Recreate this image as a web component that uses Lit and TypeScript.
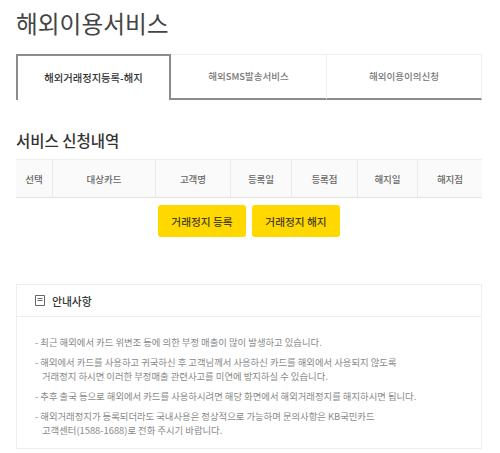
import { LitElement, html, css } from "lit";
import { customElement } from "lit/decorators.js";

const cols: [string, number][] = [
  ["선택", 37], ["대상카드", 103], ["고객명", 75], ["등록일", 61],
  ["등록점", 66], ["해지일", 60], ["해지점", 64],
];

@customElement("app-root")
export class AppRoot extends LitElement {
  static styles = css`
    :host {
      display: block;
      width: 500px;
      height: 453px;
      overflow: hidden;
      background: #fff;
      font-family: "Noto Sans CJK KR", "Noto Sans", sans-serif;
      box-sizing: border-box;
      padding: 0 18px 0 16px;
      color: #333;
    }
    h1 {
      margin: 0;
      padding-top: 8px;
      height: 54px;
      box-sizing: border-box;
      font-size: 23.7px;
      line-height: 31px;
      font-weight: 400;
      color: #444;
    }
    .tabs { display: grid; grid-template-columns: 155px 156px 155px; height: 46px; }
    .tab {
      display: flex;
      align-items: center;
      justify-content: center;
      font-size: 9.5px;
      font-weight: 500;
      color: #777;
      box-sizing: border-box;
      padding-bottom: 2px;
      border-top: 1px solid #eee;
      border-right: 1px solid #eee;
      border-bottom: 2px solid #8c8c8c;
    }
    .tab.on {
      color: #333;
      font-size: 10.3px;
      font-weight: 500;
      padding-bottom: 1px;
      border: 2px solid #8c8c8c;
      border-bottom: 0;
      background: #fff;
    }
    h2 {
      margin: 0;
      padding-top: 28px;
      height: 59px;
      box-sizing: border-box;
      font-size: 15.5px;
      line-height: 24px;
      font-weight: 500;
      color: #333;
    }
    .thead {
      display: flex;
      height: 39px;
      background: #fafafa;
      border-top: 1px solid #eee;
      border-bottom: 1px solid #e2e2e2;
      box-sizing: border-box;
    }
    .th {
      display: flex;
      align-items: center;
      justify-content: center;
      box-sizing: border-box;
      border-right: 1px solid #eaeaea;
      font-size: 9.5px;
      font-weight: 500;
      color: #666;
    }
    .th:last-child { border-right: 0; }
    .btns {
      display: flex;
      justify-content: center;
      gap: 6px;
      padding: 7px 0 0 0;
      height: 86px;
      box-sizing: border-box;
    }
    .btn {
      width: 88px;
      height: 32px;
      display: flex;
      align-items: center;
      justify-content: center;
      background: #ffd800;
      border-radius: 3px;
      font-size: 10.7px;
      font-weight: 500;
      color: #4a4020;
    }
    .notice {
      border: 1px solid #eee;
      height: 165px;
      box-sizing: border-box;
    }
    .nhead {
      height: 32px;
      box-sizing: border-box;
      border-bottom: 1px solid #eee;
      display: flex;
      align-items: center;
      gap: 7px;
      padding-left: 18px;
      font-size: 10.8px;
      font-weight: 500;
      color: #333;
    }
    .nhead svg { display: block; }
    .nbody {
      padding: 18px 10px 0 18px;
      font-size: 9.35px;
      line-height: 14px;
      color: #888;
    }
    .nbody p {
      margin: 0 0 6px;
      padding-left: 7px;
      text-indent: -7px;
      white-space: nowrap;
    }
  `;

  render() {
    return html`
      <h1>해외이용서비스</h1>
      <div class="tabs">
        <div class="tab on">해외거래정지등록-해지</div>
        <div class="tab">해외SMS발송서비스</div>
        <div class="tab">해외이용이의신청</div>
      </div>
      <h2>서비스 신청내역</h2>
      <div class="thead">
        ${cols.map(([t, w]) => html`<div class="th" style="width:${w}px">${t}</div>`)}
      </div>
      <div class="btns">
        <div class="btn">거래정지 등록</div>
        <div class="btn">거래정지 해지</div>
      </div>
      <div class="notice">
        <div class="nhead">
          <svg width="10" height="11" viewBox="0 0 10 11" fill="none" stroke="#666" stroke-width="1">
            <path d="M.5.5h9v10H.5z" />
            <path d="M2.5 3.5h5M2.5 5.5h5" />
          </svg>
          <span>안내사항</span>
        </div>
        <div class="nbody">
          <p>- 최근 해외에서 카드 위변조 등에 의한 부정 매출이 많이 발생하고 있습니다.</p>
          <p>- 해외에서 카드를 사용하고 귀국하신 후 고객님께서 사용하신 카드를 해외에서 사용되지 않도록<br />거래정지 하시면 이러한 부정매출 관련사고를 미연에 방지하실 수 있습니다.</p>
          <p>- 추후 출국 등으로 해외에서 카드를 사용하시려면 해당 화면에서 해외거래정지를 해지하시면 됩니다.</p>
          <p>- 해외거래정지가 등록되더라도 국내사용은 정상적으로 가능하며 문의사항은 KB국민카드<br />고객센터(1588-1688)로 전화 주시기 바랍니다.</p>
        </div>
      </div>
    `;
  }
}
